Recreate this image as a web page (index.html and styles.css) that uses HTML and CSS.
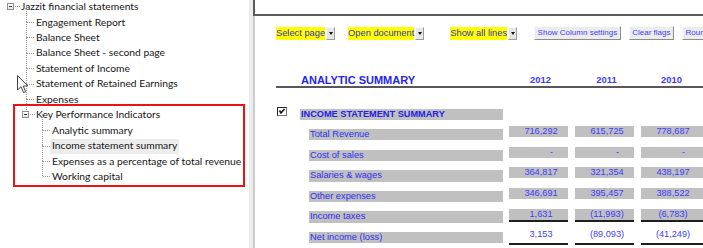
FILE: index.html
```html
<!DOCTYPE html>
<html>
<head>
<meta charset="utf-8">
<link rel="stylesheet" href="styles.css">
</head>
<body>
<div class="left">
  <div class="tree">
    <div class="row root-row"><span class="exp"></span><span class="stub"></span><span class="label">Jazzit financial statements</span></div>
    <ul class="kids l1">
      <li><span class="label">Engagement Report</span></li>
      <li><span class="label">Balance Sheet</span></li>
      <li><span class="label">Balance Sheet - second page</span></li>
      <li><span class="label">Statement of Income</span></li>
      <li><span class="label">Statement of Retained Earnings</span></li>
      <li><span class="label">Expenses</span></li>
      <li class="branch">
        <div class="row"><span class="exp"></span><span class="stub"></span><span class="label">Key Performance Indicators</span></div>
        <ul class="kids l2">
          <li><span class="label">Analytic summary</span></li>
          <li><span class="label selected">Income statement summary</span></li>
          <li><span class="label">Expenses as a percentage of total revenue</span></li>
          <li><span class="label">Working capital</span></li>
        </ul>
      </li>
    </ul>
  </div>
  <div class="annotation"></div>
  <svg class="cursor" width="12" height="19" viewBox="0 0 12 19"><path d="M0.5 0.5 L0.5 15 L4 11.7 L6.6 17.6 L8.7 16.7 L6.2 11 L10.8 11 Z" fill="#fff" stroke="#444" stroke-width="1"/></svg>
</div>
<div class="splitter"></div>
<div class="right">
  <div class="frame"></div>
  <div class="toolbar">
    <div class="dd"><span class="dd-label">Select page</span><span class="dd-arrow"></span></div>
    <div class="dd dd-open"><span class="dd-label">Open document</span><span class="dd-arrow"></span></div>
    <div class="dd dd-lines"><span class="dd-label">Show all lines</span><span class="dd-arrow"></span></div>
    <span class="btn btn-cols">Show Column settings</span>
    <span class="btn">Clear flags</span>
    <span class="btn">Round</span>
  </div>
  <div class="grid heading">
    <div class="title">ANALYTIC SUMMARY</div>
    <div class="year">2012</div>
    <div class="year">2011</div>
    <div class="year last">2010</div>
  </div>
  <div class="grid table">
    <div class="check"><svg width="10" height="9" viewBox="0 0 10 9"><rect x="0.5" y="0.5" width="9" height="8" fill="#fff" stroke="#777"/><path d="M0.5 8.5 V0.5 H9.5" fill="none" stroke="#222"/><path d="M2.5 3.5 L4 6 L7.5 2" fill="none" stroke="#111" stroke-width="1.6"/></svg></div>
    <div class="section">INCOME STATEMENT SUMMARY</div>

    <div class="label-band">Total Revenue</div>
    <div class="val">716,292</div><div class="val">615,725</div><div class="val last">778,687</div>

    <div class="label-band">Cost of sales</div>
    <div class="val nil">-</div><div class="val nil">-</div><div class="val nil last">-</div>

    <div class="label-band">Salaries &amp; wages</div>
    <div class="val">364,817</div><div class="val">321,354</div><div class="val last">438,197</div>

    <div class="label-band">Other expenses</div>
    <div class="val">346,691</div><div class="val">395,457</div><div class="val last">388,522</div>

    <div class="label-band">Income taxes</div>
    <div class="val sub">1,631</div><div class="val sub">(11,993)</div><div class="val sub last">(6,783)</div>

    <div class="label-band">Net income (loss)</div>
    <div class="val total">3,153</div><div class="val total">(89,093)</div><div class="val total last">(41,249)</div>
  </div>
</div>
</body>
</html>
```
FILE: styles.css
```css
* { box-sizing: border-box; }
html, body { margin: 0; padding: 0; }
body {
  width: 703px;
  height: 248px;
  overflow: hidden;
  display: flex;
  background: #fff;
  font-family: "Liberation Sans", Arial, sans-serif;
}

/* ---------- left tree pane ---------- */
.left {
  width: 249px;
  flex: none;
  position: relative;
  font-family: Lato, "Noto Sans", sans-serif;
  font-size: 10.3px;
  color: #161616;
}
.tree { margin-top: -1.7px; }
.row, .kids li { height: 15.48px; white-space: nowrap; display: flex; align-items: center; }
.root-row { padding-left: 7px; }
.exp {
  width: 7px;
  height: 7px;
  border: 1px solid #919191;
  background: linear-gradient(#ffffff, #e4e4e4);
  position: relative;
  flex: none;
}
.exp::after {
  content: "";
  position: absolute;
  left: 1px;
  top: 2px;
  width: 3px;
  height: 1px;
  background: #3a3a3a;
}
.stub {
  width: 5px;
  margin: 0 1px;
  border-top: 1px dotted #9a9a9a;
  flex: none;
}
.kids { list-style: none; margin: 0; padding: 0; }
.kids li { position: relative; }
.kids.l1 > li { padding-left: 36px; }
.kids.l2 > li { padding-left: 16px; }
.kids li::before {
  content: "";
  position: absolute;
  top: -8px;
  height: 15.8px;
  border-left: 1px dotted #9a9a9a;
}
.kids li::after {
  content: "";
  position: absolute;
  top: 8px;
  width: 7px;
  border-top: 1px dotted #9a9a9a;
}
.kids.l1 > li::before { left: 26px; }
.kids.l1 > li::after { left: 27px; }
.kids.l2 > li::before { left: 6px; }
.kids.l2 > li::after { left: 7px; }
.kids.l1 > li.branch { height: auto; display: block; }
.kids.l1 > li.branch::after { display: none; }
.branch > .row { margin-left: -14px; }
.label { display: block; line-height: 10px; }
.selected {
  align-self: flex-start;
  background: #ededed;
  padding: 1px 2px 4px;
  margin: 1.74px 0 0 -2px;
}

.annotation {
  position: absolute;
  left: 13px;
  top: 104px;
  width: 232px;
  height: 83px;
  border: 2px solid #ee1111;
}
.cursor { position: absolute; left: 17px; top: 75px; }

/* ---------- splitter ---------- */
.splitter { width: 4px; flex: none; background: #ececec; }

/* ---------- right pane ---------- */
.right {
  flex: 1;
  min-width: 0;
  border-left: 2px solid #cdcdcd;
}
.frame {
  height: 16px;
  margin-left: -2px;
  border-left: 2px solid #5c5c5c;
  border-bottom: 2px solid #5c5c5c;
}
.toolbar {
  display: flex;
  align-items: center;
  margin: 10px 0 0 21px;
  height: 14px;
  white-space: nowrap;
}
.dd { display: flex; height: 13px; }
.dd-open { margin-left: 13px; }
.dd-lines { margin-left: 26px; }
.dd-label {
  background: #ffff00;
  color: #3434b8;
  font-size: 9.3px;
  line-height: 13px;
}
.dd-arrow {
  width: 9px;
  height: 13px;
  margin-left: 1px;
  background: #e6e6e6;
  border: 1px solid;
  border-color: #fafafa #9c9c9c #9c9c9c #fafafa;
  display: flex;
  align-items: center;
  justify-content: center;
}
.dd-arrow::after {
  content: "";
  border-left: 2.5px solid transparent;
  border-right: 2.5px solid transparent;
  border-top: 3px solid #111;
}
.btn {
  font-size: 8px;
  color: #3b3bff;
  background: #ececec;
  height: 14px;
  line-height: 12px;
  padding: 0 2.5px;
  border: 1px solid;
  border-color: #fafafa #8c8c8c #8c8c8c #fafafa;
  margin-left: 8px;
}
.btn-cols { margin-left: 17px; }

.grid {
  display: grid;
  grid-template-columns: 24px 203px 66px 66px 68px;
  margin-left: 21px;
}
.heading {
  margin-top: 34px;
  height: 14px;
  border-bottom: 2px solid #585858;
}
.title {
  grid-column: 2;
  padding-left: 1px;
  font-weight: bold;
  font-size: 11px;
  line-height: 12px;
  color: #2424ee;
}
.year {
  margin: 0 1px 0 6px;
  padding-left: 4px;
  text-align: center;
  font-weight: bold;
  font-size: 9.4px;
  line-height: 12px;
  color: #3a3aff;
}
.year.last { margin-right: 3px; padding-left: 2px; }

.table {
  margin-top: 17.4px;
  grid-auto-rows: 20.6px;
}
.check { padding: 2px 0 0 1px; line-height: 0; }
.section {
  grid-column: 2;
  margin-top: 3.6px;
  height: 11.5px;
  line-height: 11.5px;
  padding-left: 1px;
  background: #c0c0c0;
  color: #2222e8;
  font-weight: bold;
  font-size: 9.2px;
}
.label-band {
  grid-column: 2;
  margin: 3px 0 0 9px;
  height: 11.5px;
  line-height: 11.5px;
  padding-left: 1px;
  background: #c0c0c0;
  color: #2e2ef5;
  font-size: 9.3px;
}
.val {
  margin: 0 1px 0 6px;
  height: 11px;
  line-height: 11px;
  background: #c0c0c0;
  color: #3c3cff;
  font-size: 9.2px;
  text-align: center;
  padding-left: 5px;
}
.val.last { margin-right: 0; padding-right: 3px; }
.val.nil { text-align: right; padding-right: 15px; }
.val.nil.last { padding-right: 18px; }
.val.sub { height: 12.8px; border-bottom: 2px solid #1e1e1e; margin-top: 0.6px; }
.val.total { background: none; height: 15.6px; border-bottom: 2px solid #1e1e1e; padding-top: 0.5px; }
```
